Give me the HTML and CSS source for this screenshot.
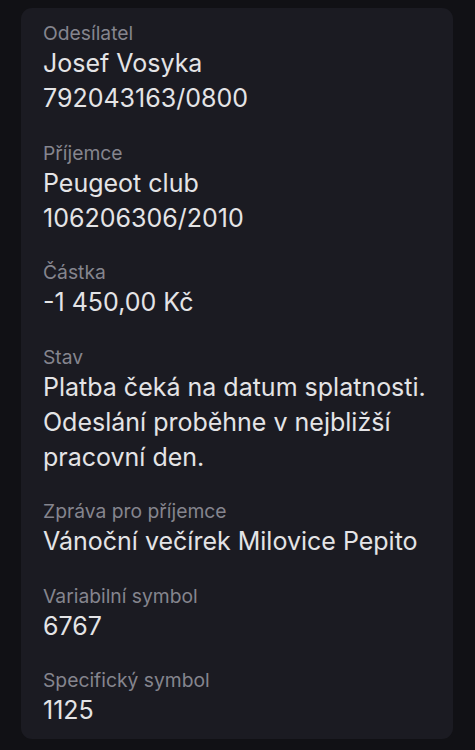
FILE: index.html
```html
<!DOCTYPE html>
<html lang="cs">
<head>
  <meta charset="UTF-8">
  <title>Detail platby</title>
  <link rel="stylesheet" href="styles.css">
</head>
<body>

<div class="card">
  <div class="field">
    <div class="label">Odesílatel</div>
    <div class="value">Josef Vosyka</div>
    <div class="value">792043163/0800</div>
  </div>

  <div class="field">
    <div class="label">Příjemce</div>
    <div class="value">Peugeot club</div>
    <div class="value">106206306/2010</div>
  </div>

  <div class="field">
    <div class="label">Částka</div>
    <div class="value">-1 450,00 Kč</div>
  </div>

  <div class="field">
    <div class="label">Stav</div>
    <div class="value">Platba čeká na datum splatnosti. Odeslání proběhne v nejbližší pracovní den.</div>
  </div>

  <div class="field">
    <div class="label">Zpráva pro příjemce</div>
    <div class="value">Vánoční večírek Milovice Pepito</div>
  </div>

  <div class="field">
    <div class="label">Variabilní symbol</div>
    <div class="value">6767</div>
  </div>

  <div class="field">
    <div class="label">Specifický symbol</div>
    <div class="value">1125</div>
  </div>
</div>

</body>
</html>
```

FILE: styles.css
```css
body {
  font-family: Inter, "Noto Sans", sans-serif;
  background: #111115;
  margin: 0;
  padding: 8px 22px 0 21px;
}
.card {
  background: #1b1b22;
  border-radius: 11px;
  padding: 12px 22px 11px 22px;
  display: flex;
  flex-direction: column;
  gap: 23.5px;
}
.label {
  font-size: 19.3px;
  line-height: 26px;
  color: #85858e;
}
.value {
  font-size: 25px;
  line-height: 35px;
  color: #e4e4e6;
}
```
